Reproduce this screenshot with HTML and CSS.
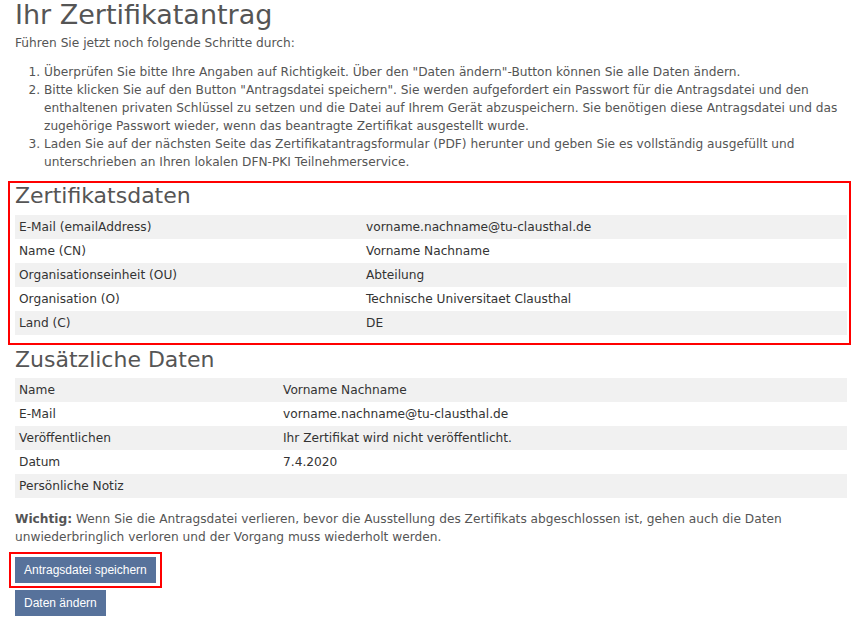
FILE: index.html
```html
<!DOCTYPE html>
<html lang="de">
<head>
    <meta charset="UTF-8">
    <title>Ihr Zertifikatantrag</title>
    <link rel="stylesheet" href="styles.css">
</head>
<body>
    <div class="page">
        <h1>Ihr Zertifikatantrag</h1>
        <p class="intro">Führen Sie jetzt noch folgende Schritte durch:</p>
        <ol class="steps">
            <li>Überprüfen Sie bitte Ihre Angaben auf Richtigkeit. Über den "Daten ändern"-Button können Sie alle Daten ändern.</li>
            <li>Bitte klicken Sie auf den Button "Antragsdatei speichern". Sie werden aufgefordert ein Passwort für die Antragsdatei und den enthaltenen privaten Schlüssel zu setzen und die Datei auf Ihrem Gerät abzuspeichern. Sie benötigen diese Antragsdatei und das zugehörige Passwort wieder, wenn das beantragte Zertifikat ausgestellt wurde.</li>
            <li>Laden Sie auf der nächsten Seite das Zertifikatantragsformular (PDF) herunter und geben Sie es vollständig ausgefüllt und unterschrieben an Ihren lokalen DFN-PKI Teilnehmerservice.</li>
        </ol>

        <div class="section marked">
            <h2>Zertifikatsdaten</h2>
            <table class="data cert">
                <tr><td>E-Mail (emailAddress)</td><td>vorname.nachname@tu-clausthal.de</td></tr>
                <tr><td>Name (CN)</td><td>Vorname Nachname</td></tr>
                <tr><td>Organisationseinheit (OU)</td><td>Abteilung</td></tr>
                <tr><td>Organisation (O)</td><td>Technische Universitaet Clausthal</td></tr>
                <tr><td>Land (C)</td><td>DE</td></tr>
            </table>
        </div>

        <div class="section">
            <h2>Zusätzliche Daten</h2>
            <table class="data extra">
                <tr><td>Name</td><td>Vorname Nachname</td></tr>
                <tr><td>E-Mail</td><td>vorname.nachname@tu-clausthal.de</td></tr>
                <tr><td>Veröffentlichen</td><td>Ihr Zertifikat wird nicht veröffentlicht.</td></tr>
                <tr><td>Datum</td><td>7.4.2020</td></tr>
                <tr><td>Persönliche Notiz</td><td></td></tr>
            </table>
        </div>

        <p class="warning"><strong>Wichtig:</strong> Wenn Sie die Antragsdatei verlieren, bevor die Ausstellung des Zertifikats abgeschlossen ist, gehen auch die Daten unwiederbringlich verloren und der Vorgang muss wiederholt werden.</p>

        <div class="actions">
            <div class="btn-mark"><button class="btn">Antragsdatei speichern</button></div>
            <button class="btn">Daten ändern</button>
        </div>
    </div>
</body>
</html>
```

FILE: styles.css
```css
body {
    margin: 0;
    font-family: 'DejaVu Sans', Verdana, sans-serif;
    font-size: 12.2px;
    line-height: 18px;
    color: #555;
    background: #fff;
}

.page {
    padding: 0 9px 0 15px;
}

h1 {
    font-size: 27px;
    font-weight: normal;
    line-height: 30px;
    margin: 0;
    color: #555;
}

h2 {
    font-size: 22px;
    font-weight: normal;
    line-height: 26px;
    margin: 0 0 6px;
    color: #555;
}

.intro {
    margin: 4px 0 11px;
}

.steps {
    margin: 0 0 10px;
    padding-left: 29px;
}

/* red annotation boxes */
.section.marked {
    border: 2px solid #f00;
    margin: 0 -4px 0 -7px;
    padding: 0 2px 8px 5px;
}

.section {
    margin-top: 2px;
}

.section h2 + .extra {
    margin-top: -1px;
}

.data {
    width: 100%;
    border-collapse: collapse;
    color: #333;
}

.data td {
    padding: 3px 4px;
    height: 18px;
    vertical-align: middle;
}

.data tr:nth-child(odd) td {
    background-color: #f1f1f1;
}

.cert td:first-child {
    width: 339px;
}

.extra td:first-child {
    width: 256px;
}

.warning {
    margin: 12px 0 6px;
}

.actions {
    display: flex;
    flex-direction: column;
    align-items: flex-start;
    gap: 2px;
}

.btn-mark {
    display: flex;
    border: 2px solid #f00;
    padding: 3px 4px;
    margin-left: -6px;
}

.btn {
    display: block;
    font-family: 'Liberation Sans', Arial, sans-serif;
    font-size: 12px;
    color: #fff;
    background-color: #57729b;
    border: none;
    padding: 0 9px;
    height: 26px;
    cursor: pointer;
}
```
